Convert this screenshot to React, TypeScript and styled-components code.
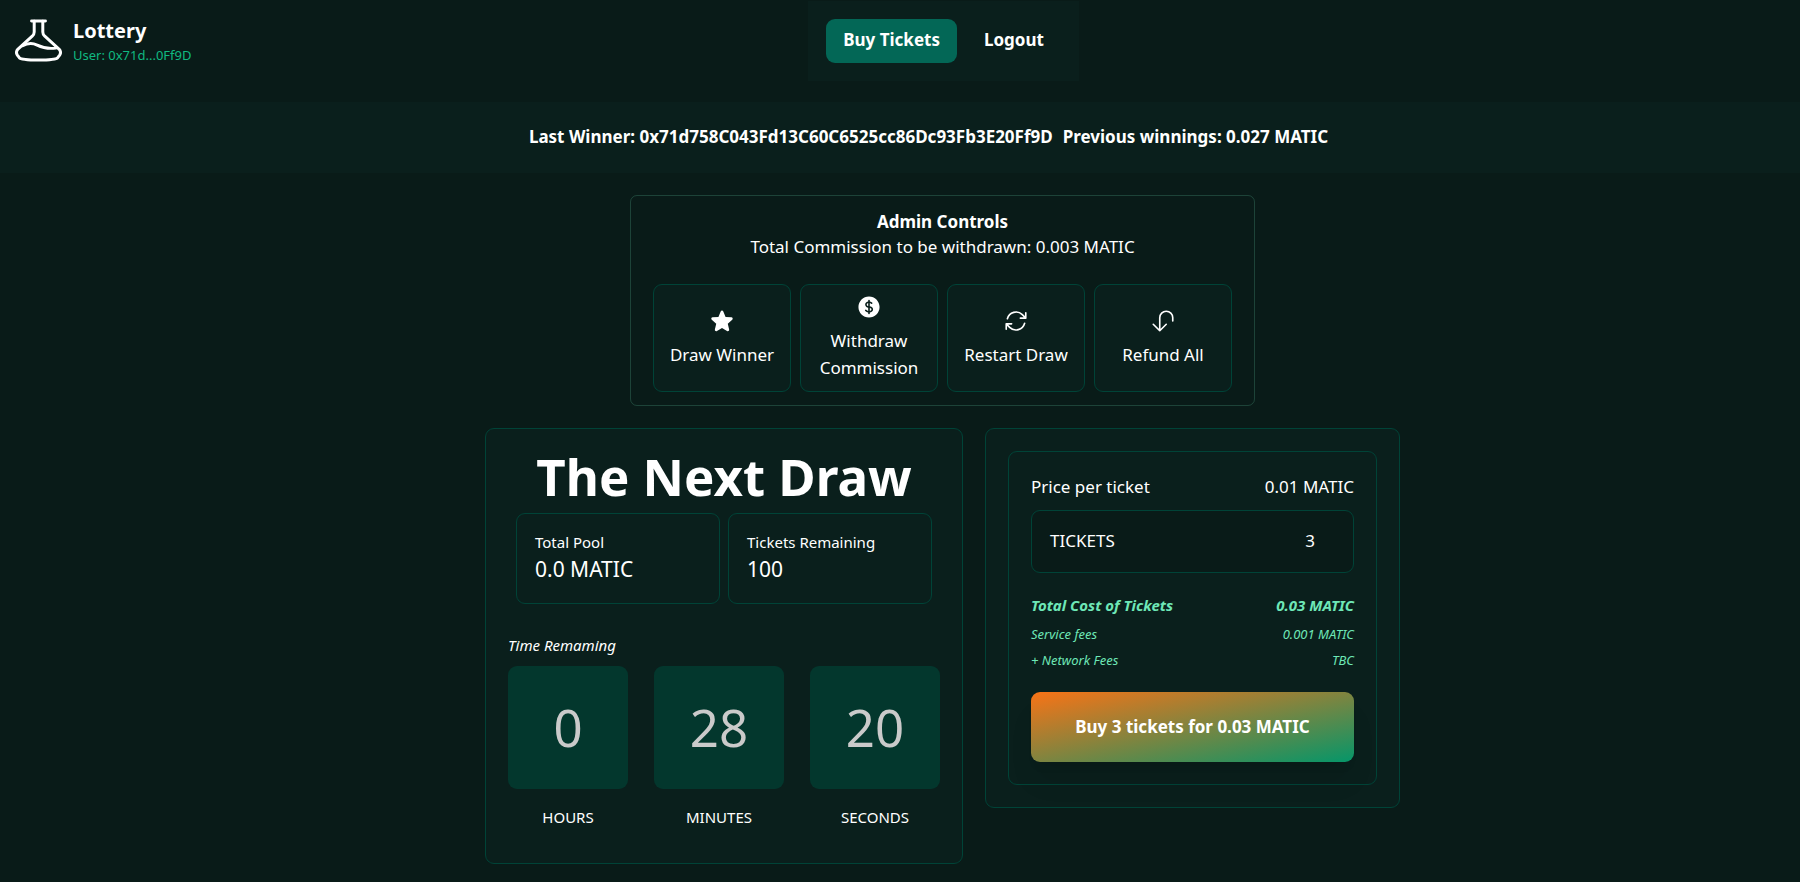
import React, { useState } from "react";
import styled, { createGlobalStyle, css } from "styled-components";
import {
  HiStar,
  HiCurrencyDollar,
  HiOutlineArrowPath,
  HiOutlineArrowUturnDown,
} from "react-icons/hi2";

const color = {
  page: "#091b18",
  panel: "#0a1f1c",
  line: "#004337",
  tile: "#03372d",
  accent: "#036756",
  mint: "#6ee7b7",
  emerald: "#10b981",
};

const GlobalStyle = createGlobalStyle`
  *, *::before, *::after { box-sizing: border-box; }
  body {
    margin: 0;
    min-height: 100vh;
    background: ${color.page};
    color: #fff;
    font: 400 17px/26px "Noto Sans", "Open Sans", sans-serif;
  }
  h1, h2, p, dl, dt, dd { margin: 0; }
  button, input { font: inherit; color: inherit; }
`;

const panel = css`
  background: ${color.panel};
  border: 1px solid ${color.line};
  border-radius: 9px;
`;

const Header = styled.header`
  display: grid;
  grid-template-columns: 11fr auto 10fr;
  align-items: start;
  height: 102px;
  padding-left: 15px;
`;

const Brand = styled.div`
  display: flex;
  align-items: flex-start;
  gap: 11px;
  padding-top: 17px;
`;

const Logo = styled.svg`
  width: 47px;
  height: 43px;
  margin-top: 2px;
`;

const BrandName = styled.h1`
  font-size: 20px;
  line-height: 28px;
`;

const UserAddress = styled.p`
  color: ${color.emerald};
  font-size: 13px;
  line-height: 20px;
`;

const Nav = styled.nav`
  display: flex;
  gap: 10px;
  margin-top: 1px;
  padding: 18px;
  background: ${color.panel};
`;

const NavButton = styled.button<{ $active?: boolean }>`
  padding: 8px 17px 10px;
  border: 0;
  border-radius: 9px;
  background: ${(p) => (p.$active ? color.accent : "transparent")};
  font-weight: 700;
  cursor: pointer;
`;

const Banner = styled.section`
  display: flex;
  justify-content: center;
  gap: 10px;
  padding: 22px 0 23px 57px;
  background: ${color.panel};
  font-weight: 700;
`;

const Main = styled.main`
  display: flex;
  flex-direction: column;
  align-items: center;
  padding: 22px 0 17px 85px;
`;

const Admin = styled.section`
  width: 100%;
  max-width: 625px;
  padding: 13px 22px;
  border: 1px solid rgba(110, 231, 183, 0.2);
  border-radius: 7px;
  text-align: center;
`;

const AdminTitle = styled.h2`
  font-size: 17px;
  line-height: 25px;
`;

const AdminActions = styled.div`
  display: grid;
  grid-template-columns: repeat(4, 1fr);
  gap: 9px;
  margin-top: 24px;
`;

const AdminButton = styled.button`
  ${panel}
  display: flex;
  flex-direction: column;
  align-items: center;
  justify-content: center;
  gap: 7px;
  height: 108px;
  padding: 0 8px 1px;
  line-height: 27px;
  cursor: pointer;

  svg {
    width: 26px;
    height: 26px;
  }
`;

const Columns = styled.div`
  display: grid;
  grid-template-columns: 478fr 415fr;
  align-items: start;
  gap: 22px;
  width: 100%;
  max-width: 915px;
  margin-top: 22px;
`;

const DrawCard = styled.section`
  ${panel}
  padding: 22px 22px 35px;
`;

const DrawTitle = styled.h2`
  font-size: 51px;
  line-height: 51px;
  text-align: center;
`;

const Stats = styled.dl`
  display: grid;
  grid-template-columns: 1fr 1fr;
  gap: 8px;
  margin: 11px 8px 0;
`;

const Stat = styled.div`
  ${panel}
  padding: 17px 18px 18px;
`;

const StatLabel = styled.dt`
  font-size: 15px;
  line-height: 22px;
`;

const StatValue = styled.dd`
  font-size: 21px;
  line-height: 32px;
`;

const TimeLabel = styled.p`
  margin: 30px 0 10px;
  font-size: 15px;
  font-style: italic;
  line-height: 22px;
`;

const Clock = styled.div`
  display: grid;
  grid-template-columns: 12fr 13fr 13fr;
  gap: 26px;
`;

const Unit = styled.div`
  font-size: 15px;
  line-height: 22px;
  text-align: center;
`;

const Digits = styled.div`
  margin-bottom: 17px;
  padding: 22px 0;
  border-radius: 9px;
  background: ${color.tile};
  color: #cacaca;
  font-size: 51px;
  line-height: 79px;
`;

const BuyCard = styled.section`
  ${panel}
  padding: 22px;
`;

const BuyForm = styled.form`
  ${panel}
  padding: 22px;
`;

const Row = styled.div`
  display: flex;
  justify-content: space-between;
`;

const TicketField = styled.label`
  ${panel}
  display: flex;
  align-items: center;
  justify-content: space-between;
  margin: 10px 0 21px;
  padding: 17px 18px 18px;
  background: ${color.page};
`;

const TicketInput = styled.input`
  width: 120px;
  height: 26px;
  padding: 0 20px 0 0;
  border: 0;
  outline: 0;
  background: transparent;
  text-align: right;
`;

const CostRow = styled(Row)<{ $strong?: boolean }>`
  color: ${color.mint};
  font-size: ${(p) => (p.$strong ? 15 : 13)}px;
  font-style: italic;
  font-weight: ${(p) => (p.$strong ? 700 : 400)};
  line-height: ${(p) => (p.$strong ? 23 : 18)}px;

  & + & {
    margin-top: 8px;
  }
`;

const BuyButton = styled.button`
  width: 100%;
  margin-top: 23px;
  padding: 22px 0;
  border: 0;
  border-radius: 9px;
  background: linear-gradient(to bottom right, #f97316, #059669);
  box-shadow: 0 22px 28px -6px rgba(0, 0, 0, 0.1), 0 9px 11px -7px rgba(0, 0, 0, 0.1);
  font-weight: 700;
  cursor: pointer;
`;

const actions = [
  { label: "Draw Winner", Icon: HiStar },
  { label: "Withdraw Commission", Icon: HiCurrencyDollar },
  { label: "Restart Draw", Icon: HiOutlineArrowPath },
  { label: "Refund All", Icon: HiOutlineArrowUturnDown },
];

const stats = [
  { label: "Total Pool", value: "0.0 MATIC" },
  { label: "Tickets Remaining", value: "100" },
];

const clock = [
  { label: "HOURS", value: 0 },
  { label: "MINUTES", value: 28 },
  { label: "SECONDS", value: 20 },
];

const TICKET_PRICE = 0.01;

function Flask() {
  return (
    <Logo
      viewBox="15 21 142 130"
      fill="none"
      stroke="#fff"
      strokeWidth="9"
      strokeLinecap="round"
      strokeLinejoin="round"
      aria-hidden="true"
    >
      <path d="M65 27H107" />
      <path d="M73 28V60Q73 67 67 73L24 112Q16 121 22 130L28 138Q34 145 86 145Q138 145 144 138L150 130Q156 121 148 112L105 73Q99 67 99 60V28" />
      <path d="M38 102C52 94 68 93 82 100C98 108 112 112 138 109" />
    </Logo>
  );
}

export default function App() {
  const [tickets, setTickets] = useState(3);
  const total = (tickets * TICKET_PRICE).toFixed(2);

  return (
    <>
      <GlobalStyle />
      <Header>
        <Brand>
          <Flask />
          <div>
            <BrandName>Lottery</BrandName>
            <UserAddress>User: 0x71d...0Ff9D</UserAddress>
          </div>
        </Brand>
        <Nav>
          <NavButton type="button" $active>
            Buy Tickets
          </NavButton>
          <NavButton type="button">Logout</NavButton>
        </Nav>
      </Header>

      <Banner>
        <p>Last Winner: 0x71d758C043Fd13C60C6525cc86Dc93Fb3E20Ff9D</p>
        <p>Previous winnings: 0.027 MATIC</p>
      </Banner>

      <Main>
        <Admin>
          <AdminTitle>Admin Controls</AdminTitle>
          <p>Total Commission to be withdrawn: 0.003 MATIC</p>
          <AdminActions>
            {actions.map(({ label, Icon }) => (
              <AdminButton key={label} type="button">
                <Icon aria-hidden="true" />
                {label}
              </AdminButton>
            ))}
          </AdminActions>
        </Admin>

        <Columns>
          <DrawCard>
            <DrawTitle>The Next Draw</DrawTitle>
            <Stats>
              {stats.map(({ label, value }) => (
                <Stat key={label}>
                  <StatLabel>{label}</StatLabel>
                  <StatValue>{value}</StatValue>
                </Stat>
              ))}
            </Stats>
            <TimeLabel>Time Remaming</TimeLabel>
            <Clock>
              {clock.map(({ label, value }) => (
                <Unit key={label}>
                  <Digits>{value}</Digits>
                  {label}
                </Unit>
              ))}
            </Clock>
          </DrawCard>

          <BuyCard>
            <BuyForm onSubmit={(e) => e.preventDefault()}>
              <Row>
                <span>Price per ticket</span>
                <span>0.01 MATIC</span>
              </Row>
              <TicketField htmlFor="tickets">
                TICKETS
                <TicketInput
                  id="tickets"
                  inputMode="numeric"
                  value={tickets}
                  onChange={(e) => setTickets(Number(e.target.value) || 0)}
                />
              </TicketField>
              <CostRow $strong>
                <span>Total Cost of Tickets</span>
                <span>{total} MATIC</span>
              </CostRow>
              <CostRow>
                <span>Service fees</span>
                <span>0.001 MATIC</span>
              </CostRow>
              <CostRow>
                <span>+ Network Fees</span>
                <span>TBC</span>
              </CostRow>
              <BuyButton type="submit">
                Buy {tickets} tickets for {total} MATIC
              </BuyButton>
            </BuyForm>
          </BuyCard>
        </Columns>
      </Main>
    </>
  );
}
